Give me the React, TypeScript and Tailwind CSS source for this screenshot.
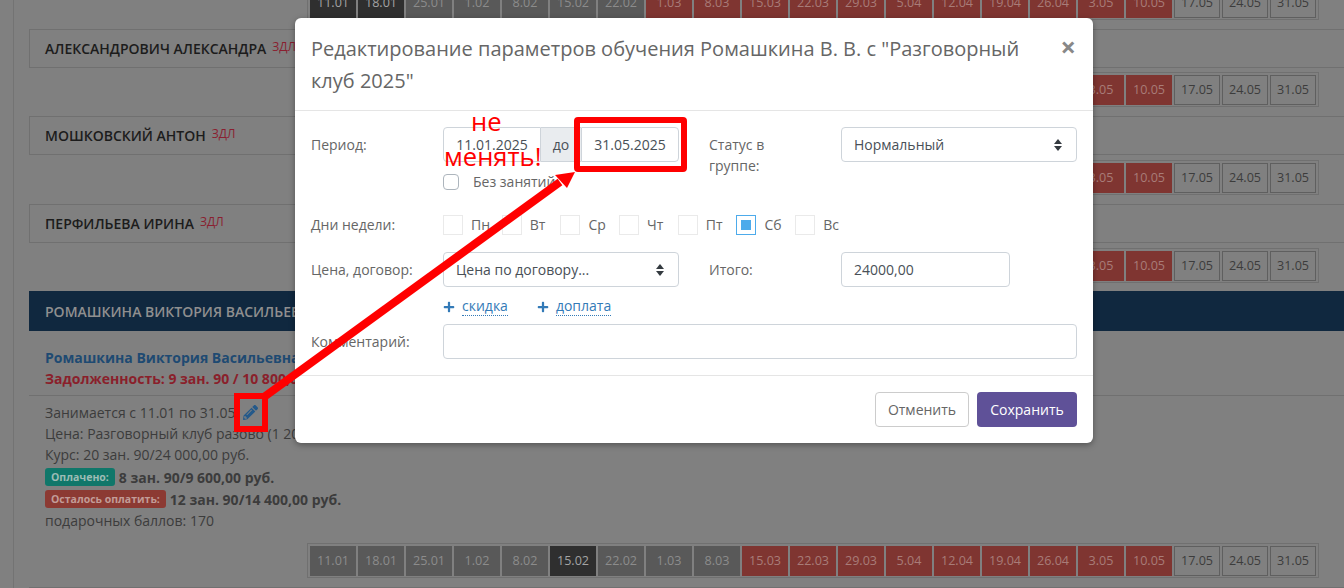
import { FaPencilAlt, FaPlus } from "react-icons/fa";

const dates = [
  "11.01", "18.01", "25.01", "1.02", "8.02", "15.02", "22.02", "1.03", "8.03", "15.03", "22.03",
  "29.03", "5.04", "12.04", "19.04", "26.04", "3.05", "10.05", "17.05", "24.05", "31.05",
];

const cellStyles = {
  current: "bg-[#2f2f2f] text-[#a3a3a3]",
  past: "bg-[#595959] text-[#8c8c8c]",
  debt: "bg-[#7f3531] text-[#a87c78]",
  future: "border border-[#5f5f5f] text-[#3c3c3c]",
};

function cellKind(index: number, currentUpTo: number, currentOnly: number) {
  if (index <= currentUpTo || index === currentOnly) return cellStyles.current;
  if (index < 9 && currentOnly >= 0) return cellStyles.past;
  if (index < 7) return cellStyles.past;
  if (index < 18) return cellStyles.debt;
  return cellStyles.future;
}

function DateStrip({ currentUpTo = -1, currentOnly = -1, className = "" }: { currentUpTo?: number; currentOnly?: number; className?: string }) {
  return (
    <div className={`flex justify-end pr-[25px] ${className}`}>
      <div className="flex gap-[2px] border border-[#707070] px-[2px] pb-[1px] pt-[2px]">
        {dates.map((date, index) => (
          <span
            className={`flex h-[30px] w-[46px] items-center justify-center text-[12.6px] ${cellKind(index, currentUpTo, currentOnly)}`}
            key={date}
          >
            {date}
          </span>
        ))}
      </div>
    </div>
  );
}

function StudentCard({ name, className = "" }: { name: string; className?: string }) {
  return (
    <div className={`flex h-[39px] items-center gap-[6px] border border-r-0 border-[#707070] pl-[15px] ${className}`}>
      <span className="text-[14px] font-semibold text-[#1c1c1c]">{name}</span>
      <span className="-mt-[3px] text-[12px] text-[#8a1f30]">ЗДЛ</span>
    </div>
  );
}

function SortArrows() {
  return (
    <svg className="h-[12px] w-[8px] text-[#343a40]" viewBox="0 0 8 12" fill="currentColor">
      <polygon points="4,0 8,5 0,5" />
      <polygon points="4,12 8,7 0,7" />
    </svg>
  );
}

function SelectBox({ value, className = "" }: { value: string; className?: string }) {
  return (
    <div className={`flex h-[35px] items-center justify-between rounded-[4px] border border-[#ced4da] bg-white pl-[12px] pr-[14px] text-[14px] text-[#495057] ${className}`}>
      {value}
      <SortArrows />
    </div>
  );
}

const inputClass = "h-[35px] border border-[#ced4da] bg-white text-[14px] text-[#495057] outline-none";

function Day({ label, checked = false }: { label: string; checked?: boolean }) {
  return (
    <div className="flex w-[58.7px] items-center text-[14px] text-[#666]">
      <span className={`flex size-[20px] items-center justify-center border ${checked ? "border-[#4dabeb]" : "border-[#eaeaea]"}`}>
        {checked && <span className="size-[10px] bg-[#4dabeb]" />}
      </span>
      <span className="ml-[8px] -mt-[2px]">{label}</span>
    </div>
  );
}

function AddLink({ label }: { label: string }) {
  return (
    <span className="flex items-center gap-[7px] text-[14px] text-[#337ab7]">
      <FaPlus className="size-[12px]" />
      <span className="border-b border-dotted border-[#337ab7] leading-[18px]">{label}</span>
    </span>
  );
}

function EditModal() {
  return (
    <div className="absolute left-[295px] top-[18px] w-[798px] rounded-[6px] bg-white shadow-[0_2px_6px_rgba(0,0,0,0.35)]">
      <div className="flex h-[93px] items-start justify-between border-b border-[#e5e5e5] pl-[16px] pr-[17px] pt-[15px]">
        <h5 className="w-[730px] text-[20px] leading-[32px] text-[#666]">
          Редактирование параметров обучения Ромашкина В. В. с "Разговорный клуб 2025"
        </h5>
        <span className="text-[27px] font-bold leading-[28px] text-[#888]">×</span>
      </div>

      <div className="h-[264px] px-[16px] pt-[16px] text-[14px] text-[#666]">
        <div className="flex h-[88px]">
          <label className="w-[132px] pt-[7px]">Период:</label>
          <div className="w-[236px]">
            <div className="flex">
              <input className={`${inputClass} w-[98px] rounded-l-[4px] text-center`} readOnly value="11.01.2025" />
              <span className="flex h-[35px] w-[40px] items-center justify-center border-y border-[#ced4da] bg-[#e9ecef] text-[#495057]">до</span>
              <input className={`${inputClass} w-[98px] rounded-r-[4px] text-center`} readOnly value="31.05.2025" />
            </div>
            <div className="mt-[12px] -translate-y-[3px] flex items-center gap-[14px]">
              <span className="size-[16px] rounded-[4px] border border-[#adb5bd]" />
              <span>Без занятий</span>
            </div>
          </div>
          <label className="ml-[30px] w-[132px] pt-[7px] leading-[21px]">Статус в<br />группе:</label>
          <SelectBox className="w-[236px]" value="Нормальный" />
        </div>

        <div className="flex h-[37px] items-start">
          <label className="w-[132px] leading-[20px]">Дни недели:</label>
          <Day label="Пн" />
          <Day label="Вт" />
          <Day label="Ср" />
          <Day label="Чт" />
          <Day label="Пт" />
          <Day checked label="Сб" />
          <Day label="Вс" />
        </div>

        <div className="flex h-[45px]">
          <label className="w-[132px] pt-[7px]">Цена, договор:</label>
          <SelectBox className="w-[236px]" value="Цена по договору..." />
          <label className="ml-[30px] w-[132px] pt-[7px]">Итого:</label>
          <input className={`${inputClass} w-[169px] rounded-[4px] px-[12px]`} readOnly value="24000,00" />
        </div>

        <div className="ml-[132px] flex h-[27px] items-start gap-[29px]">
          <AddLink label="скидка" />
          <AddLink label="доплата" />
        </div>

        <div className="flex">
          <label className="w-[132px] pt-[7px]">Комментарий:</label>
          <input className={`${inputClass} w-[634px] rounded-[4px]`} readOnly />
        </div>
      </div>

      <div className="flex h-[68px] items-start justify-end gap-[8px] border-t border-[#e5e5e5] px-[16px] pt-[16px] text-[14px]">
        <button className="h-[35px] w-[94px] rounded-[4px] border border-[#ccc] bg-white text-[#666]">Отменить</button>
        <button className="h-[35px] w-[100px] rounded-[4px] bg-[#5f5198] text-white">Сохранить</button>
      </div>
    </div>
  );
}

function Annotations() {
  return (
    <>
      <svg className="absolute inset-0" width="1344" height="588" viewBox="0 0 1344 588" fill="none">
        <rect x="237" y="396" width="28" height="33" stroke="#ff0000" strokeWidth="6" />
        <rect x="577" y="120" width="107" height="49" rx="1" stroke="#ff0000" strokeWidth="6" />
        <line x1="264" y1="397" x2="560" y2="182" stroke="#ff0000" strokeWidth="8" />
        <polygon points="575,172 555,175 567,188" fill="#ff0000" />
      </svg>
      <div className="absolute left-[444px] top-[104px] font-['Open_Sans',sans-serif] text-[25.6px] leading-[35px] text-[#ff0000]">
        <div className="ml-[27px]">не</div>
        <div>менять!</div>
      </div>
    </>
  );
}

export default function App() {
  return (
    <div className="relative h-[588px] w-[1344px] overflow-hidden bg-[#808080] font-['Open_Sans',sans-serif] text-[14px] text-[#3c3c3c]">
      <div className="ml-[13px] border-l border-[#737373] pl-[15px]">
        <DateStrip className="-mt-[15px]" currentUpTo={1} />
        <StudentCard className="mt-[9px]" name="АЛЕКСАНДРОВИЧ АЛЕКСАНДРА" />
        <DateStrip className="mt-[4px]" />
        <StudentCard className="mt-[9px]" name="МОШКОВСКИЙ АНТОН" />
        <DateStrip className="mt-[5px]" />
        <StudentCard className="mt-[9px]" name="ПЕРФИЛЬЕВА ИРИНА" />
        <DateStrip className="mt-[5px]" />

        <div className="mt-[8px] flex h-[40px] items-center bg-[#10283f] pl-[16px] text-[14px] font-semibold text-[#8f8f8f]">
          РОМАШКИНА ВИКТОРИЯ ВАСИЛЬЕВНА
        </div>

        <div className="border-b border-[#707070] pb-[6px] pl-[16px] pt-[16px] font-bold leading-[21px]">
          <div className="text-[#1e4a72]">Ромашкина Виктория Васильевна</div>
          <div className="text-[#8a1f2b]">Задолженность: 9 зан. 90 / 10 800,00 руб.</div>
        </div>

        <div className="pl-[16px] pt-[6px] leading-[21px]">
          <div className="flex items-center gap-[8px]">
            Занимается с 11.01 по 31.05
            <FaPencilAlt className="size-[15px] text-[#24598a]" />
          </div>
          <div>Цена: Разговорный клуб разово (1 200,00 руб.)</div>
          <div className="h-[22px]">Курс: 20 зан. 90/24 000,00 руб.</div>
          <div className="flex h-[22px] items-center gap-[4px] font-bold">
            <span className="rounded-[3px] bg-[#10776a] px-[6px] text-[10.5px] leading-[18px] text-[#9cbcb5]">Оплачено:</span>
            8 зан. 90/9 600,00 руб.
          </div>
          <div className="flex h-[22px] items-center gap-[4px] font-bold">
            <span className="rounded-[3px] bg-[#8c3a33] px-[6px] text-[10.5px] leading-[18px] text-[#c29c98]">Осталось оплатить:</span>
            12 зан. 90/14 400,00 руб.
          </div>
          <div>подарочных баллов: 170</div>
        </div>

        <DateStrip className="mt-[12px]" currentOnly={5} />
        <div className="mt-[9px] border-t border-[#707070]" />
      </div>

      <EditModal />
      <Annotations />
    </div>
  );
}
